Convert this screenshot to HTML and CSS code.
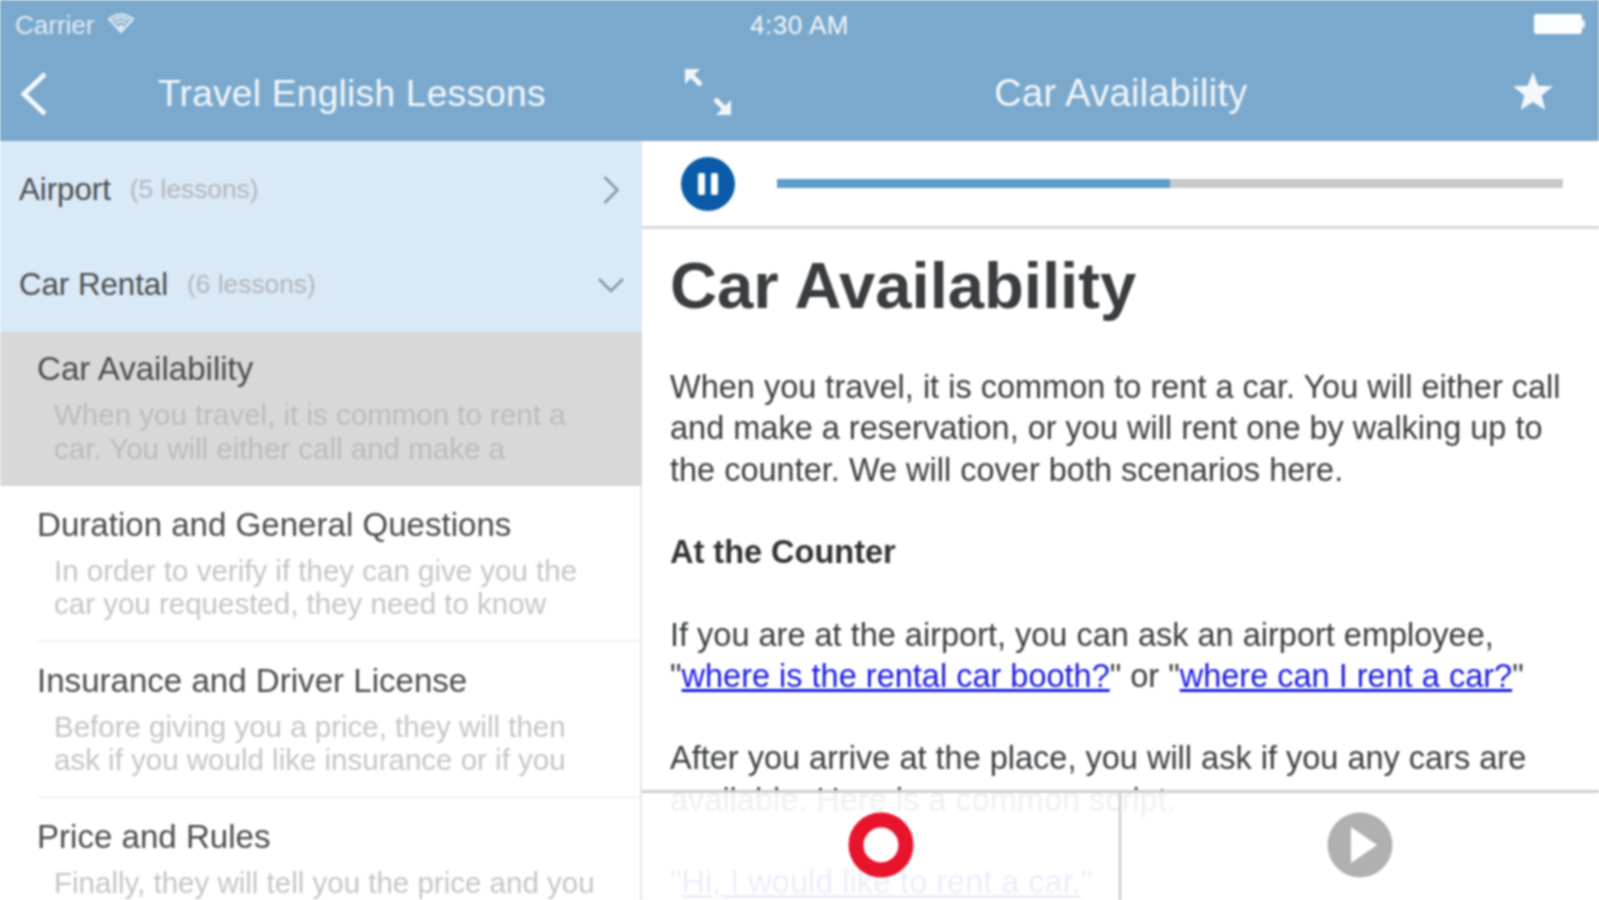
FILE: index.html
```html
<!DOCTYPE html>
<html lang="en">
<head>
    <meta charset="UTF-8">
    <meta name="viewport" content="width=device-width, initial-scale=1.0">
    <title>Travel English Lessons</title>
    <link rel="stylesheet" href="styles.css">
</head>
<body>
    <div class="app">
        <div class="sidebar">
            <div class="topbar">
                <div class="status">
                    <span>Carrier</span>
                    <svg class="wifi" width="26" height="20" viewBox="0 0 26 20">
                        <path d="M1 6 Q13 -3 25 6 L13 19 Z M5 7.5 Q13 1.5 21 7.5 M8 10.5 Q13 6.5 18 10.5" fill="none" stroke="#e6eff6" stroke-width="2"/>
                        <path d="M10 13 Q13 11 16 13 L13 18 Z" fill="#e6eff6"/>
                    </svg>
                </div>
                <div class="nav nav-left">
                    <svg class="back" width="32" height="46" viewBox="0 0 32 46">
                        <path d="M27 3 L6 23 L27 43" fill="none" stroke="#f4f8fb" stroke-width="5"/>
                    </svg>
                    <h2 class="nav-title">Travel English Lessons</h2>
                </div>
            </div>
            <div class="section section-open">
                <div class="section-row">
                    <span class="section-name">Airport</span>
                    <span class="section-count">(5 lessons)</span>
                    <svg class="section-arrow" width="24" height="30" viewBox="0 0 24 30">
                        <path d="M3.5 2 L16.5 15 L3.5 28" fill="none" stroke="#8a959d" stroke-width="2.5"/>
                    </svg>
                </div>
                <div class="section-row">
                    <span class="section-name">Car Rental</span>
                    <span class="section-count">(6 lessons)</span>
                    <svg class="section-arrow" width="28" height="20" viewBox="0 0 28 20">
                        <path d="M2 4 L14 16 L26 4" fill="none" stroke="#8a959d" stroke-width="2.5"/>
                    </svg>
                </div>
            </div>
            <div class="lesson lesson-active">
                <h3>Car Availability</h3>
                <p>When you travel, it is common to rent a car. You will either call and make a</p>
            </div>
            <div class="lesson">
                <h3>Duration and General Questions</h3>
                <p>In order to verify if they can give you the car you requested, they need to know</p>
            </div>
            <div class="lesson">
                <h3>Insurance and Driver License</h3>
                <p>Before giving you a price, they will then ask if you would like insurance or if you</p>
            </div>
            <div class="lesson">
                <h3>Price and Rules</h3>
                <p>Finally, they will tell you the price and you</p>
            </div>
        </div>

        <div class="main">
            <div class="topbar">
                <div class="status status-right">
                    <span class="clock">4:30 AM</span>
                    <span class="battery"></span>
                </div>
                <div class="nav nav-right">
                    <svg class="expand" width="48" height="48" viewBox="0 0 48 48">
                        <path d="M1 1 H16 L1 16 Z M47 47 H32 L47 32 Z" fill="#f0f5f9"/>
                        <path d="M5 5 L17 17 M43 43 L31 31" fill="none" stroke="#f0f5f9" stroke-width="5"/>
                    </svg>
                    <h2 class="nav-title">Car Availability</h2>
                    <svg class="star" width="42" height="40" viewBox="0 0 44 42">
                        <path d="M22 1 L27.5 15.5 L43 16 L31 25.8 L35 41 L22 32.5 L9 41 L13 25.8 L1 16 L16.5 15.5 Z" fill="#f4f8fb"/>
                    </svg>
                </div>
            </div>
            <div class="player">
                <svg class="pause" width="54" height="54" viewBox="0 0 54 54">
                    <circle cx="27" cy="27" r="27" fill="#0a5ca8"/>
                    <rect x="17" y="16" width="7" height="22" rx="2" fill="#fff"/>
                    <rect x="30" y="16" width="7" height="22" rx="2" fill="#fff"/>
                </svg>
                <div class="track"><div class="track-done" style="width: 50%"></div></div>
            </div>
            <div class="article">
                <h1>Car Availability</h1>
                <p>When you travel, it is common to rent a car. You will either call and make a reservation, or you will rent one by walking up to the counter. We will cover both scenarios here.</p>
                <p><b>At the Counter</b></p>
                <p>If you are at the airport, you can ask an airport employee,<br>"<a href="#">where is the rental car booth?</a>" or "<a href="#">where can I rent a car?</a>"</p>
                <p>After you arrive at the place, you will ask if you any cars are available. Here is a common script.</p>
                <p>"<a href="#">Hi, I would like to rent a car.</a>"</p>
            </div>
            <div class="recorder">
                <div class="rec-cell rec-left">
                    <svg width="66" height="66" viewBox="0 0 66 66">
                        <circle cx="33" cy="33" r="25" fill="none" stroke="#e8142b" stroke-width="15"/>
                    </svg>
                </div>
                <div class="rec-cell">
                    <svg width="66" height="66" viewBox="0 0 66 66">
                        <circle cx="33" cy="33" r="32.5" fill="#b0b0b0"/>
                        <path d="M24 15 L50 33 L24 51 Z" fill="#fff"/>
                    </svg>
                </div>
            </div>
        </div>
    </div>
</body>
</html>
```

FILE: styles.css
```css
* { box-sizing: border-box; }
html, body { margin: 0; height: 100%; overflow: hidden; background: #fff; }
body { font-family: "Liberation Sans", Arial, sans-serif; color: #3a3d40; }

.app { display: grid; grid-template-columns: 642px 1fr; height: 900px; filter: blur(0.8px); }
.sidebar, .main { position: relative; height: 900px; overflow: hidden; }

.topbar { height: 141px; background: #7aa9cd; color: #f2f6fa; }
.sidebar .topbar { border-right: 1px solid #84adcc; }
.status { display: flex; align-items: center; gap: 14px; height: 50px; padding-left: 15px; font-size: 26px; color: #dfeaf3; }
.wifi { margin-top: -4px; }
.status-right { justify-content: space-between; padding: 0 14px 0 108px; letter-spacing: 0.5px; color: #f0f5f9; }
.battery { position: relative; width: 48px; height: 20px; border-radius: 3px; background: #fbfdfe; margin-top: -2px; margin-right: 3px; }
.battery::after { content: ""; position: absolute; left: 48px; top: 6px; width: 3px; height: 8px; background: #e6eff6; }

.nav { display: flex; align-items: center; height: 91px; padding-bottom: 4px; }
.nav-title { margin: 0; font-size: 38px; letter-spacing: 0.3px; font-weight: normal; color: #f2f6fa; }
.nav-left { padding-left: 18px; }
.nav-left .nav-title { margin-left: 108px; font-size: 37px; }
.nav-right { justify-content: space-between; padding: 0 45px 4px 42px; }
.nav-right .nav-title { margin-right: 2px; }
.star { margin-bottom: 6px; }
.expand { margin-bottom: 3px; }

.section { height: 191px; background: #d9e9f6; }
.section-row { display: flex; align-items: center; height: 95px; padding: 2px 17px 0 19px; }
.section-name { font-size: 31.2px; color: #4a4d50; }
.section-count { flex: 1; margin-left: 19px; font-size: 26.3px; color: #b3b8bc; }

.lesson { height: 156px; margin-left: 37px; padding-top: 19.5px; border-bottom: 2px solid #f1f1f1; border-right: 2px solid #e4e6e8; }
.lesson h3 { margin: 0; font-size: 33.1px; font-weight: normal; color: #4a4c4e; }
.lesson p { margin: 10px 0 0 17px; padding-right: 30px; font-size: 29.5px; line-height: 33.5px; color: #c4c5c6; }
.lesson-active { margin-left: 0; padding-left: 37px; background: #d8d8d8; border-bottom: 0; border-right: 0; height: 154px; padding-top: 18px; }
.lesson-active p { color: #bcbcbc; }

.player { display: flex; align-items: center; gap: 42px; height: 88px; padding: 0 36px 0 39px; border-bottom: 3px solid #d8d8d8; }
.track { flex: 1; height: 9px; background: #c8c8c8; }
.track-done { height: 100%; background: #5b9ccb; }

.article { padding: 0 28px; font-size: 32.5px; line-height: 41.25px; }
.article h1 { margin: 21px 0 45px; font-size: 65.2px; line-height: 72px; color: #3a3d40; }
.article p { margin: 0 0 41.25px; }
.article b { color: #333; }
.article a { color: #1a1ae0; }

.recorder { position: absolute; left: 0; right: 0; top: 790px; bottom: 0; display: flex; border-top: 3px solid #cfcfcf; background: rgba(255, 255, 255, 0.92); }
.rec-cell { flex: 1; display: flex; justify-content: center; padding-top: 19px; }
.rec-left { flex: 0 0 477px; }
.rec-cell + .rec-cell { border-left: 2px solid #c4c4c4; }
```
